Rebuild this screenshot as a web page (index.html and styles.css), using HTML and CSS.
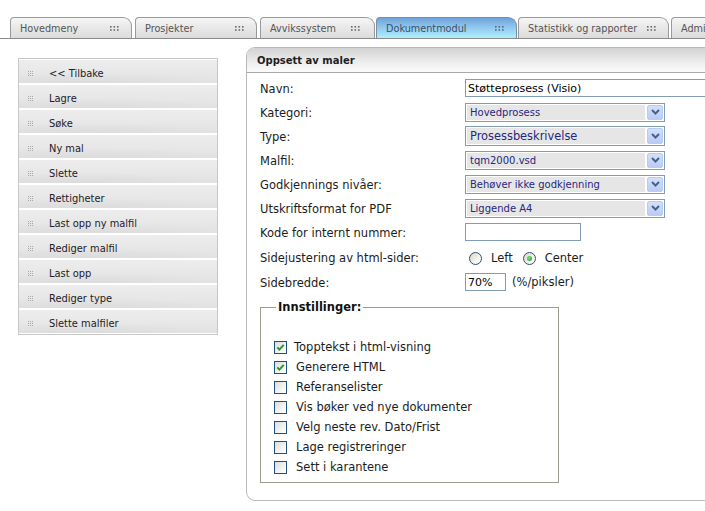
FILE: index.html
```html
<!DOCTYPE html>
<html lang="no">
<head>
<meta charset="utf-8">
<title>Oppsett av maler</title>
<link rel="stylesheet" href="styles.css">
</head>
<body>
<div class="tabbar">
  <div class="tab w1"><span>Hovedmeny</span><svg class="tdots" width="9" height="5" viewBox="0 0 9 5"><g fill="#6a6a6a"><rect x="0" y="0" width="1.6" height="1.6"/><rect x="3.5" y="0" width="1.6" height="1.6"/><rect x="7" y="0" width="1.6" height="1.6"/><rect x="0" y="3.2" width="1.6" height="1.6"/><rect x="3.5" y="3.2" width="1.6" height="1.6"/><rect x="7" y="3.2" width="1.6" height="1.6"/></g></svg></div>
  <div class="tab w2"><span>Prosjekter</span><svg class="tdots" width="9" height="5" viewBox="0 0 9 5"><g fill="#6a6a6a"><rect x="0" y="0" width="1.6" height="1.6"/><rect x="3.5" y="0" width="1.6" height="1.6"/><rect x="7" y="0" width="1.6" height="1.6"/><rect x="0" y="3.2" width="1.6" height="1.6"/><rect x="3.5" y="3.2" width="1.6" height="1.6"/><rect x="7" y="3.2" width="1.6" height="1.6"/></g></svg></div>
  <div class="tab w3"><span>Avvikssystem</span><svg class="tdots" width="9" height="5" viewBox="0 0 9 5"><g fill="#6a6a6a"><rect x="0" y="0" width="1.6" height="1.6"/><rect x="3.5" y="0" width="1.6" height="1.6"/><rect x="7" y="0" width="1.6" height="1.6"/><rect x="0" y="3.2" width="1.6" height="1.6"/><rect x="3.5" y="3.2" width="1.6" height="1.6"/><rect x="7" y="3.2" width="1.6" height="1.6"/></g></svg></div>
  <div class="tab w4 active"><span>Dokumentmodul</span><svg class="tdots" width="9" height="5" viewBox="0 0 9 5"><g fill="#5a6a7a"><rect x="0" y="0" width="1.6" height="1.6"/><rect x="3.5" y="0" width="1.6" height="1.6"/><rect x="7" y="0" width="1.6" height="1.6"/><rect x="0" y="3.2" width="1.6" height="1.6"/><rect x="3.5" y="3.2" width="1.6" height="1.6"/><rect x="7" y="3.2" width="1.6" height="1.6"/></g></svg></div>
  <div class="tab w5"><span>Statistikk og rapporter</span><svg class="tdots" width="9" height="5" viewBox="0 0 9 5"><g fill="#6a6a6a"><rect x="0" y="0" width="1.6" height="1.6"/><rect x="3.5" y="0" width="1.6" height="1.6"/><rect x="7" y="0" width="1.6" height="1.6"/><rect x="0" y="3.2" width="1.6" height="1.6"/><rect x="3.5" y="3.2" width="1.6" height="1.6"/><rect x="7" y="3.2" width="1.6" height="1.6"/></g></svg></div>
  <div class="tab w6"><span>Administrasjon</span></div>
</div>

<div class="main">
  <div class="sidemenu">
    <div class="mitem"><span class="mdots"></span>&lt;&lt; Tilbake</div>
    <div class="mitem"><span class="mdots"></span>Lagre</div>
    <div class="mitem"><span class="mdots"></span>Søke</div>
    <div class="mitem"><span class="mdots"></span>Ny mal</div>
    <div class="mitem"><span class="mdots"></span>Slette</div>
    <div class="mitem"><span class="mdots"></span>Rettigheter</div>
    <div class="mitem"><span class="mdots"></span>Last opp ny malfil</div>
    <div class="mitem"><span class="mdots"></span>Rediger malfil</div>
    <div class="mitem"><span class="mdots"></span>Last opp</div>
    <div class="mitem"><span class="mdots"></span>Rediger type</div>
    <div class="mitem"><span class="mdots"></span>Slette malfiler</div>
  </div>

  <div class="panel">
    <div class="phead">Oppsett av maler</div>
    <div class="form">
      <div class="row"><div class="lbl">Navn:</div><div class="ctl"><input class="txt wide" type="text" value="Støtteprosess (Visio)"></div></div>
      <div class="row"><div class="lbl">Kategori:</div><div class="ctl"><div class="sel"><span class="val">Hovedprosess</span><span class="btn"><svg width="9" height="6" viewBox="0 0 9 6"><path d="M1 1l3.5 3.5L8 1" fill="none" stroke="#4d6185" stroke-width="2"/></svg></span></div></div></div>
      <div class="row"><div class="lbl">Type:</div><div class="ctl"><div class="sel tall"><span class="val big">Prosessbeskrivelse</span><span class="btn"><svg width="9" height="6" viewBox="0 0 9 6"><path d="M1 1l3.5 3.5L8 1" fill="none" stroke="#4d6185" stroke-width="2"/></svg></span></div></div></div>
      <div class="row"><div class="lbl">Malfil:</div><div class="ctl"><div class="sel"><span class="val">tqm2000.vsd</span><span class="btn"><svg width="9" height="6" viewBox="0 0 9 6"><path d="M1 1l3.5 3.5L8 1" fill="none" stroke="#4d6185" stroke-width="2"/></svg></span></div></div></div>
      <div class="row"><div class="lbl">Godkjennings nivåer:</div><div class="ctl"><div class="sel"><span class="val">Behøver ikke godkjenning</span><span class="btn"><svg width="9" height="6" viewBox="0 0 9 6"><path d="M1 1l3.5 3.5L8 1" fill="none" stroke="#4d6185" stroke-width="2"/></svg></span></div></div></div>
      <div class="row"><div class="lbl">Utskriftsformat for PDF</div><div class="ctl"><div class="sel"><span class="val">Liggende A4</span><span class="btn"><svg width="9" height="6" viewBox="0 0 9 6"><path d="M1 1l3.5 3.5L8 1" fill="none" stroke="#4d6185" stroke-width="2"/></svg></span></div></div></div>
      <div class="row"><div class="lbl">Kode for internt nummer:</div><div class="ctl"><input class="txt code" type="text" value=""></div></div>
      <div class="row r26"><div class="lbl">Sidejustering av html-sider:</div><div class="ctl radios"><span class="radio"></span><span class="rtext">Left</span><span class="radio on"><span class="rdot"></span></span><span class="rtext">Center</span></div></div>
      <div class="row"><div class="lbl">Sidebredde:</div><div class="ctl"><input class="txt pct" type="text" value="70%"><span class="unit">(%/piksler)</span></div></div>

      <fieldset class="settings">
        <legend>Innstillinger:</legend>
        <div class="cblist">
          <div class="cbrow"><span class="cb"><svg width="11" height="11" viewBox="0 0 11 11"><path d="M2.3 5.4l2.1 2.2L8.7 2.8" fill="none" stroke="#21a121" stroke-width="2"/></svg></span><span class="cbtext">Topptekst i html-visning</span></div>
          <div class="cbrow"><span class="cb"><svg width="11" height="11" viewBox="0 0 11 11"><path d="M2.3 5.4l2.1 2.2L8.7 2.8" fill="none" stroke="#21a121" stroke-width="2"/></svg></span><span class="cbtext">Generere HTML</span></div>
          <div class="cbrow"><span class="cb"></span><span class="cbtext">Referanselister</span></div>
          <div class="cbrow"><span class="cb"></span><span class="cbtext">Vis bøker ved nye dokumenter</span></div>
          <div class="cbrow"><span class="cb"></span><span class="cbtext">Velg neste rev. Dato/Frist</span></div>
          <div class="cbrow"><span class="cb"></span><span class="cbtext">Lage registreringer</span></div>
          <div class="cbrow"><span class="cb"></span><span class="cbtext">Sett i karantene</span></div>
        </div>
      </fieldset>
    </div>
  </div>
</div>
</body>
</html>
```

FILE: styles.css
```css
html, body {
  margin: 0;
  padding: 0;
  background: #fff;
}
body {
  width: 705px;
  height: 511px;
  overflow: hidden;
  font-family: "DejaVu Sans", Verdana, sans-serif;
  color: #1a1a1a;
}

/* ---------- tabs ---------- */
.tabbar {
  display: flex;
  height: 21px;
  padding: 17px 0 0 10px;
  border-bottom: 1px solid #8a8a8a;
  overflow: hidden;
  white-space: nowrap;
}
.tab {
  flex: none;
  box-sizing: border-box;
  height: 21px;
  border: 1px solid #9a9a9a;
  border-bottom: none;
  border-radius: 4px 9px 0 0;
  background: linear-gradient(#f6f6f6, #e9e9e9 45%, #dcdcdc);
  display: flex;
  align-items: center;
  justify-content: space-between;
  padding: 1px 12px 0 9px;
  font-size: 9.7px;
  color: #555;
}
.tab.active {
  background: linear-gradient(#6fa3db, #8fc6ee 45%, #aef0ff);
  border-color: #7c8ea0;
  color: #3d4f63;
}
.w1 { width: 122px; margin-right: 3px; }
.w2 { width: 122px; margin-right: 3px; }
.w3 { width: 115px; margin-right: 1px; padding-right: 14px; }
.w4 { width: 141px; margin-right: 1px; }
.w5 { width: 151px; margin-right: 2px; }
.w6 { width: 110px; overflow: hidden; }
.tdots { flex: none; }

/* ---------- main ---------- */
.main {
  display: flex;
  align-items: flex-start;
  padding-left: 18px;
}

/* side menu */
.sidemenu {
  flex: none;
  width: 200px;
  box-sizing: border-box;
  margin-top: 19px;
  border: 1px solid #c8c8c8;
  padding: 1px 0;
  display: flex;
  flex-direction: column;
  gap: 2px;
}
.mitem {
  box-sizing: border-box;
  height: 23px;
  display: flex;
  align-items: center;
  padding: 3px 0 0 9px;
  font-size: 9.9px;
  color: #231a26;
  background:
    radial-gradient(ellipse 140px 10px at 35% 100%, #dcdcdc, rgba(220,220,220,0) 100%),
    linear-gradient(#ededed, #e7e7e7 60%, #e2e2e2);
}
.mdots {
  flex: none;
  width: 6px;
  height: 5px;
  padding-right: 15px;
  background-image:
    linear-gradient(90deg, #a8a8a8 1px, transparent 1px),
    linear-gradient(90deg, #a8a8a8 1px, transparent 1px),
    linear-gradient(90deg, #a8a8a8 1px, transparent 1px);
  background-size: 2px 1px, 2px 1px, 2px 1px;
  background-position: 0 0, 0 2px, 0 4px;
  background-repeat: repeat-x;
  background-clip: content-box;
  background-origin: content-box;
}

/* panel */
.panel {
  flex: none;
  width: 470px;
  height: 454px;
  box-sizing: border-box;
  margin: 8px 0 0 28px;
  border: 1px solid #b8b8b8;
  border-radius: 9px 0 0 9px;
  overflow: hidden;
}
.phead {
  box-sizing: border-box;
  height: 25px;
  border-bottom: 1px solid #a9a9a9;
  background: linear-gradient(#d2d2d2, #ececec 55%, #fbfbfb);
  padding: 1px 0 0 10px;
  font-size: 10px;
  font-weight: bold;
  color: #1e1e1e;
  display: flex;
  align-items: center;
}
.form {
  padding: 3px 0 0 13px;
}
.row {
  display: flex;
  align-items: center;
  height: 24px;
}
.row.r26 { height: 26px; }
.lbl {
  flex: none;
  width: 205px;
  font-size: 11.5px;
  color: #1c1c1c;
  padding-top: 1px;
}
.ctl {
  display: flex;
  align-items: center;
  flex: 1;
  min-width: 0;
}
.txt {
  box-sizing: border-box;
  height: 18px;
  border: 1px solid #7f9db9;
  padding: 0 2px;
  margin: 0;
  font-family: "DejaVu Sans", Verdana, sans-serif;
  font-size: 11px;
  color: #000;
  background: #fff;
  outline: none;
}
.txt.wide { width: 260px; }
.txt.code { width: 116px; }
.txt.pct { width: 41px; }
.unit {
  margin-left: 6px;
  font-size: 11.5px;
  color: #1c1c1c;
}

/* select look-alike */
.sel {
  box-sizing: border-box;
  width: 200px;
  height: 19px;
  border: 1px solid #7f9db9;
  background: #fff;
  padding: 1px;
  display: flex;
  gap: 2px;
}
.sel.tall { height: 20px; }
.sel .val {
  flex: 1;
  background: #e6e6e6;
  color: #27277f;
  font-size: 10px;
  padding-left: 3px;
  display: flex;
  align-items: center;
  white-space: nowrap;
}
.sel .val.big { font-size: 11.4px; }
.sel .btn {
  flex: none;
  box-sizing: border-box;
  width: 16px;
  border: 1px solid #b9cbf3;
  border-radius: 2px;
  background: linear-gradient(#d3e0fc, #b9cbf6);
  display: flex;
  align-items: center;
  justify-content: center;
}

/* radios */
.radios { padding: 2px 0 0 4px; }
.radio {
  box-sizing: border-box;
  width: 13px;
  height: 13px;
  border-radius: 50%;
  border: 1px solid #2f4f6f;
  background: linear-gradient(135deg, #d4d4cc, #f4f4f0 60%, #fff);
  display: flex;
  align-items: center;
  justify-content: center;
  flex: none;
}
.rdot {
  width: 5px;
  height: 5px;
  border-radius: 50%;
  background: radial-gradient(circle at 40% 40%, #7ee07e, #1f9a1f);
}
.rtext {
  font-size: 11.5px;
  color: #1c1c1c;
  margin: 0 10px 0 9px;
}

/* fieldset */
.settings {
  box-sizing: border-box;
  width: 299px;
  margin: 6px 0 0 0;
  padding: 0 0 5px 13px;
  border: 1px solid #9d9d8f;
}
.settings legend {
  font-size: 11.5px;
  font-weight: bold;
  color: #111;
  padding: 0 2px;
  margin-left: 2px;
  line-height: 14px;
}
.cblist {
  padding-top: 23px;
}
.cbrow {
  height: 20px;
  display: flex;
  align-items: center;
}
.cb {
  flex: none;
  box-sizing: border-box;
  width: 13px;
  height: 13px;
  border: 1px solid #1c5180;
  background: linear-gradient(135deg, #dcdcd7, #f5f5f2 65%, #fff);
  display: flex;
  align-items: center;
  justify-content: center;
}
.cbtext {
  margin-left: 9px;
  font-size: 11.5px;
  color: #1c1c1c;
}
.cbrow:first-child .cbtext { margin-left: 7px; }
```
